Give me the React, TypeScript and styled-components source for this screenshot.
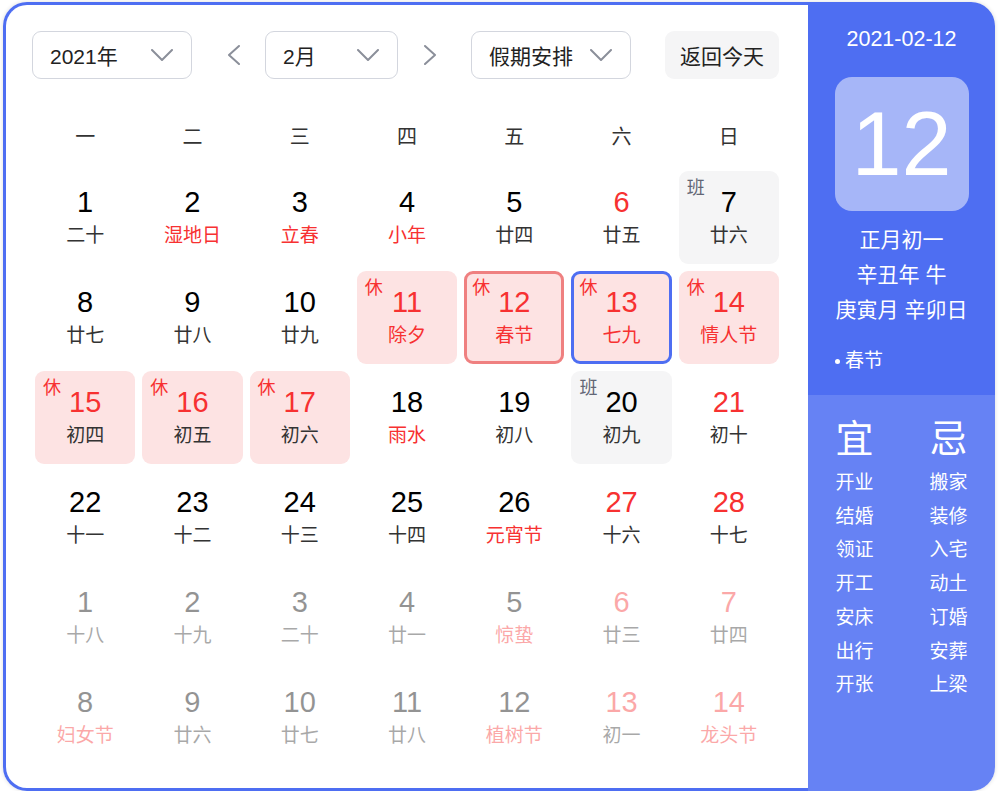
import styled, { createGlobalStyle } from 'styled-components';

const GlobalStyle = createGlobalStyle`
    html, body {
        margin: 0;
        padding: 0;
        background: #ffffff;
    }
    body {
        padding: 2px 0 0 3px;
        font-family: "Liberation Sans", "Noto Sans CJK SC", sans-serif;
    }
`

const FONT = `"Liberation Sans", "Noto Sans CJK SC", sans-serif`
const BLUE = '#4e6ef2'
const RED = '#f73131'

const Card = styled.div`
    display: flex;
    width: 992px;
    height: 789px;
    border-radius: 24px;
    box-shadow: 0 0 4px rgba(0, 0, 0, 0.14);
    font-family: ${FONT};
`

const Main = styled.div`
    box-sizing: border-box;
    width: 805px;
    height: 100%;
    background: #ffffff;
    border: 3px solid ${BLUE};
    border-right: none;
    border-radius: 24px 0 0 24px;
    padding: 26px 29px 0 29px;
`

const Toolbar = styled.div`
    display: flex;
    align-items: center;
    height: 48px;
    margin-left: -3px;
`

const Select = styled.div<{ $w: number }>`
    box-sizing: border-box;
    width: ${p => p.$w}px;
    height: 48px;
    display: flex;
    align-items: center;
    justify-content: space-between;
    padding: 0 18px 0 17px;
    border: 1.5px solid #d3d6de;
    border-radius: 9px;
    font-size: 21px;
    color: #222;
`

const Arrow = styled.div<{ $side: 'prev' | 'next' }>`
    width: 32px;
    height: 48px;
    display: flex;
    align-items: center;
    justify-content: center;
    margin: ${p => (p.$side === 'prev' ? '0 16px 0 25px' : '0 25px 0 16px')};
`

const TodayButton = styled.div`
    margin-left: auto;
    width: 114px;
    height: 48px;
    display: flex;
    align-items: center;
    justify-content: center;
    background: #f5f5f6;
    border-radius: 9px;
    font-size: 21px;
    color: #222;
`

const WeekRow = styled.div`
    display: grid;
    grid-template-columns: repeat(7, 1fr);
    column-gap: 7px;
    margin-top: 36px;
    height: 40px;
    margin-bottom: 16px;
`

const WeekDay = styled.div`
    display: flex;
    align-items: center;
    justify-content: center;
    font-size: 20px;
    color: #333;
`

const Grid = styled.div`
    display: grid;
    grid-template-columns: repeat(7, 1fr);
    grid-auto-rows: 93px;
    gap: 7px;
`

type Kind = 'normal' | 'rest' | 'work'

const Cell = styled.div<{ $kind: Kind; $outline?: 'red' | 'blue'; $faded?: boolean }>`
    position: relative;
    box-sizing: border-box;
    display: flex;
    flex-direction: column;
    align-items: center;
    border-radius: 9px;
    background: ${p => (p.$kind === 'rest' ? '#fde3e3' : p.$kind === 'work' ? '#f5f5f6' : 'transparent')};
    border: ${p => (p.$outline === 'red' ? '3px solid #ef8080' : p.$outline === 'blue' ? `3px solid ${BLUE}` : 'none')};
    padding-top: ${p => (p.$outline ? '12px' : '15px')};
    opacity: ${p => (p.$faded ? 0.42 : 1)};
`

const Num = styled.div<{ $red?: boolean }>`
    font-size: 29px;
    line-height: 32px;
    color: ${p => (p.$red ? RED : '#000')};
`

const Lunar = styled.div<{ $red?: boolean }>`
    margin-top: 6px;
    font-size: 19px;
    line-height: 24px;
    color: ${p => (p.$red ? RED : '#333')};
`

const Badge = styled.span<{ $kind: Kind; $inset: number }>`
    position: absolute;
    left: ${p => p.$inset}px;
    top: ${p => p.$inset - 1}px;
    font-size: 18px;
    line-height: 20px;
    color: ${p => (p.$kind === 'rest' ? RED : '#626675')};
`

const Side = styled.div`
    flex: 1;
    display: flex;
    flex-direction: column;
    border-radius: 0 24px 24px 0;
    overflow: hidden;
    color: #fff;
`

const SideTop = styled.div`
    height: 393px;
    background: ${BLUE};
    display: flex;
    flex-direction: column;
    align-items: center;
    padding-top: 24px;
    box-sizing: border-box;
`

const DateLine = styled.div`
    font-size: 21.5px;
    line-height: 26px;
`

const BigDay = styled.div`
    margin-top: 25px;
    width: 134px;
    height: 134px;
    border-radius: 17px;
    background: #a6b6f8;
    display: flex;
    align-items: center;
    justify-content: center;
    font-size: 90px;
    line-height: 1;
`

const LunarInfo = styled.div`
    margin-top: 11px;
    display: flex;
    flex-direction: column;
    align-items: center;
    font-size: 21px;
    line-height: 35px;
`

const Festival = styled.div`
    align-self: flex-start;
    margin: 21px 0 0 27px;
    font-size: 19px;
    line-height: 26px;
    display: flex;
    align-items: center;
    gap: 5px;
`

const Dot = styled.span`
    width: 5px;
    height: 5px;
    border-radius: 50%;
    background: #fff;
`

const SideBottom = styled.div`
    flex: 1;
    background: #6682f4;
    display: flex;
    justify-content: center;
    gap: 34px;
    padding-top: 22px;
`

const AdviceColumn = styled.div`
    width: 60px;
    display: flex;
    flex-direction: column;
    align-items: center;
`

const AdviceHead = styled.div`
    font-size: 38px;
    line-height: 44px;
    margin-bottom: 5px;
`

const AdviceItem = styled.div`
    font-size: 19px;
    line-height: 33.7px;
`

function ChevronDown() {
    return (
        <svg width="22" height="12" viewBox="0 0 22 12">
            <polyline points="1,1 11,11 21,1" fill="none" stroke="#8b8f9a" strokeWidth="2" strokeLinecap="round" strokeLinejoin="round" />
        </svg>
    )
}

function ChevronSide({ dir }: { dir: 'left' | 'right' }) {
    const pts = dir === 'left' ? '12,1 2,10 12,19' : '1,1 11,10 1,19'
    return (
        <svg width="13" height="20" viewBox="0 0 13 20">
            <polyline points={pts} fill="none" stroke="#8b8f9a" strokeWidth="2" strokeLinecap="round" strokeLinejoin="round" />
        </svg>
    )
}

type Day = {
    n: number
    lunar: string
    numRed?: boolean
    lunarRed?: boolean
    kind?: Kind
    outline?: 'red' | 'blue'
    faded?: boolean
}

const days: Day[] = [
    { n: 1, lunar: '二十' },
    { n: 2, lunar: '湿地日', lunarRed: true },
    { n: 3, lunar: '立春', lunarRed: true },
    { n: 4, lunar: '小年', lunarRed: true },
    { n: 5, lunar: '廿四' },
    { n: 6, lunar: '廿五', numRed: true },
    { n: 7, lunar: '廿六', kind: 'work' },

    { n: 8, lunar: '廿七' },
    { n: 9, lunar: '廿八' },
    { n: 10, lunar: '廿九' },
    { n: 11, lunar: '除夕', kind: 'rest', numRed: true, lunarRed: true },
    { n: 12, lunar: '春节', kind: 'rest', numRed: true, lunarRed: true, outline: 'red' },
    { n: 13, lunar: '七九', kind: 'rest', numRed: true, lunarRed: true, outline: 'blue' },
    { n: 14, lunar: '情人节', kind: 'rest', numRed: true, lunarRed: true },

    { n: 15, lunar: '初四', kind: 'rest', numRed: true },
    { n: 16, lunar: '初五', kind: 'rest', numRed: true },
    { n: 17, lunar: '初六', kind: 'rest', numRed: true },
    { n: 18, lunar: '雨水', lunarRed: true },
    { n: 19, lunar: '初八' },
    { n: 20, lunar: '初九', kind: 'work' },
    { n: 21, lunar: '初十', numRed: true },

    { n: 22, lunar: '十一' },
    { n: 23, lunar: '十二' },
    { n: 24, lunar: '十三' },
    { n: 25, lunar: '十四' },
    { n: 26, lunar: '元宵节', lunarRed: true },
    { n: 27, lunar: '十六', numRed: true },
    { n: 28, lunar: '十七', numRed: true },

    { n: 1, lunar: '十八', faded: true },
    { n: 2, lunar: '十九', faded: true },
    { n: 3, lunar: '二十', faded: true },
    { n: 4, lunar: '廿一', faded: true },
    { n: 5, lunar: '惊蛰', lunarRed: true, faded: true },
    { n: 6, lunar: '廿三', numRed: true, faded: true },
    { n: 7, lunar: '廿四', numRed: true, faded: true },

    { n: 8, lunar: '妇女节', lunarRed: true, faded: true },
    { n: 9, lunar: '廿六', faded: true },
    { n: 10, lunar: '廿七', faded: true },
    { n: 11, lunar: '廿八', faded: true },
    { n: 12, lunar: '植树节', lunarRed: true, faded: true },
    { n: 13, lunar: '初一', numRed: true, faded: true },
    { n: 14, lunar: '龙头节', numRed: true, lunarRed: true, faded: true },
]

const weekDays = ['一', '二', '三', '四', '五', '六', '日']
const good = ['开业', '结婚', '领证', '开工', '安床', '出行', '开张']
const bad = ['搬家', '装修', '入宅', '动土', '订婚', '安葬', '上梁']

function App() {
    return (
        <>
            <GlobalStyle />
            <Card>
                <Main>
                    <Toolbar>
                        <Select $w={160}>2021年<ChevronDown /></Select>
                        <Arrow $side="prev"><ChevronSide dir="left" /></Arrow>
                        <Select $w={133}>2月<ChevronDown /></Select>
                        <Arrow $side="next"><ChevronSide dir="right" /></Arrow>
                        <Select $w={160}>假期安排<ChevronDown /></Select>
                        <TodayButton>返回今天</TodayButton>
                    </Toolbar>

                    <WeekRow>
                        {weekDays.map(w => <WeekDay key={w}>{w}</WeekDay>)}
                    </WeekRow>

                    <Grid>
                        {days.map((d, i) => {
                            const kind = d.kind ?? 'normal'
                            return (
                                <Cell key={i} $kind={kind} $outline={d.outline} $faded={d.faded}>
                                    {kind !== 'normal' && (
                                        <Badge $kind={kind} $inset={d.outline ? 5 : 8}>
                                            {kind === 'rest' ? '休' : '班'}
                                        </Badge>
                                    )}
                                    <Num $red={d.numRed}>{d.n}</Num>
                                    <Lunar $red={d.lunarRed}>{d.lunar}</Lunar>
                                </Cell>
                            )
                        })}
                    </Grid>
                </Main>

                <Side>
                    <SideTop>
                        <DateLine>2021-02-12</DateLine>
                        <BigDay>12</BigDay>
                        <LunarInfo>
                            <div>正月初一</div>
                            <div>辛丑年 牛</div>
                            <div>庚寅月 辛卯日</div>
                        </LunarInfo>
                        <Festival><Dot />春节</Festival>
                    </SideTop>
                    <SideBottom>
                        <AdviceColumn>
                            <AdviceHead>宜</AdviceHead>
                            {good.map(g => <AdviceItem key={g}>{g}</AdviceItem>)}
                        </AdviceColumn>
                        <AdviceColumn>
                            <AdviceHead>忌</AdviceHead>
                            {bad.map(b => <AdviceItem key={b}>{b}</AdviceItem>)}
                        </AdviceColumn>
                    </SideBottom>
                </Side>
            </Card>
        </>
    )
}

export default App;
